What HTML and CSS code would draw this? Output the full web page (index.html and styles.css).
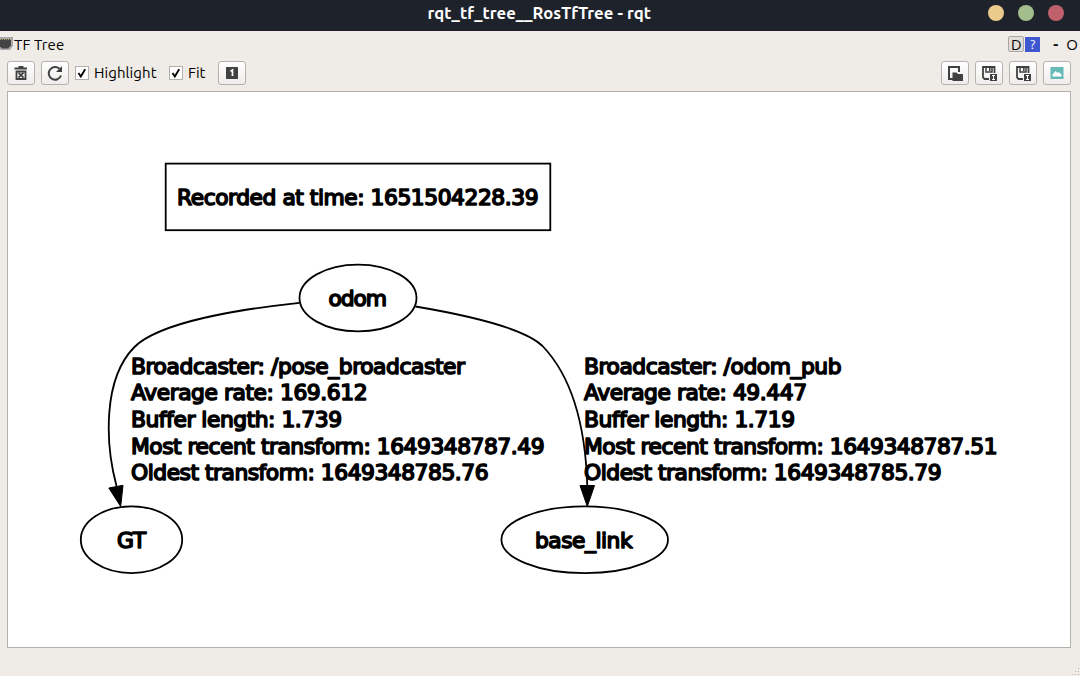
FILE: index.html
```html
<!DOCTYPE html>
<html lang="en">
<head>
<meta charset="utf-8">
<title>rqt_tf_tree__RosTfTree - rqt</title>
<link rel="stylesheet" href="styles.css">
</head>
<body>
<div class="window">
  <header class="titlebar">
    <h1 class="title">rqt_tf_tree__RosTfTree - rqt</h1>
    <div class="controls"><span class="dot yellow"></span><span class="dot green"></span><span class="dot red"></span></div>
  </header>
  <div class="dock">
    <svg class="dock-icon" width="13" height="14" viewBox="0 0 13 14"><path d="M0 0h13v9l-3 4H0z" fill="#aaa"/><path d="M0 2h11v6.500l-3 3H2L0 9.500z" fill="#444"/><path d="M0 2.500h11" stroke="#b5a66a" stroke-dasharray="1 1"/></svg>
    <span class="dock-name">TF Tree</span>
    <div class="dock-actions"><span class="key">D</span><span class="help">?</span><span class="minus">-</span><span class="float">O</span></div>
  </div>
  <div class="toolbar">
    <button class="tool"><svg width="14" height="16" viewBox="0 0 14 16"><path d="M.5 3.500h12.500M4.500 2h5" stroke="#414141" stroke-width="2"/><path d="M2.500 6.500h9V14h-9z" fill="none" stroke="#414141" stroke-width="1.800"/><path d="M4.500 7.700l5 5m0-5l-5 5" stroke="#414141" stroke-width="1.700"/></svg></button>
    <button class="tool"><svg width="16" height="16" viewBox="0 0 16 16"><path d="M14 10.500A6.300 6.300 0 1 1 12.400 3.800" fill="none" stroke="#414141" stroke-width="2"/><path d="M15 1v6H9z" fill="#414141"/></svg></button>
    <label class="check"><span class="box"><svg width="12" height="12" viewBox="0 0 12 12"><path d="M2.500 6l2.300 3.500L9.200 2.200" fill="none" stroke="#000" stroke-width="1.900"/></svg></span><span class="highlight">Highlight</span></label>
    <label class="check fit"><span class="box"><svg width="12" height="12" viewBox="0 0 12 12"><path d="M2.500 6l2.300 3.500L9.200 2.200" fill="none" stroke="#000" stroke-width="1.900"/></svg></span><span>Fit</span></label>
    <button class="tool"><svg width="12" height="12" viewBox="0 0 12 12"><rect width="12" height="12" rx=".5" fill="#414141"/><path d="M4.500 4.300L6.500 3v6" fill="none" stroke="#fff" stroke-width="1.700"/></svg></button>
    <div class="files">
      <button class="tool"><svg width="16" height="16" viewBox="0 0 16 16"><path d="M6 14H2V2h10v5" fill="none" stroke="#414141" stroke-width="2"/><path d="M5.500 7.500h4L11 9h5v7H5.500z" fill="#414141"/></svg></button>
      <button class="tool"><svg width="16" height="16" viewBox="0 0 16 16"><path d="M8 14H3.500L2 12.500V2h11.500v6" fill="none" stroke="#414141" stroke-width="1.800"/><path d="M5 2v5h6V2" fill="none" stroke="#414141" stroke-width="1.500"/><path d="M8.800 2v4" stroke="#414141" stroke-width="1.500"/><rect x="9" y="9" width="7" height="7" fill="#414141"/><path d="M11 10.500h3m-1.500 0v4m-1.500 0h3" stroke="#fff"/></svg></button>
      <button class="tool"><svg width="16" height="16" viewBox="0 0 16 16"><path d="M8 14H3.500L2 12.500V2h11.500v6" fill="none" stroke="#414141" stroke-width="1.800"/><path d="M5 2v5h6V2" fill="none" stroke="#414141" stroke-width="1.500"/><path d="M8.800 2v4" stroke="#414141" stroke-width="1.500"/><rect x="9" y="9" width="7" height="7" fill="#414141"/><path d="M11 10.500h3m-1.500 0v4m-1.500 0h3" stroke="#fff"/></svg></button>
      <button class="tool"><svg width="14" height="12" viewBox="0 0 14 12"><rect x=".5" width="13" height="12" fill="#66b9b4"/><path d="M2.500 9.500V7.500L5.500 4l2 2 1.200-1L11.500 7.500v2z" fill="#fff"/></svg></button>
    </div>
  </div>
  <main class="canvas">
    <svg class="graph" width="1062" height="555" viewBox="8 92 1062 555">
      <rect class="shape" x="165.700" y="163.600" width="384.600" height="66.600"/>
      <ellipse class="shape" cx="358" cy="298" rx="58.500" ry="33.400"/>
      <ellipse class="shape" cx="131.500" cy="539.700" rx="50.700" ry="33.400"/>
      <ellipse class="shape" cx="584.700" cy="539.700" rx="83.300" ry="33.400"/>
      <path class="shape" d="M299.500 302.800C242 309 159 322 134 347.500C103 379 105 443 116.500 486"/>
      <path class="shape" d="M415.500 306.500C460 314 523 327 542.500 346C579 384 586 443 587.300 486"/>
      <path class="arrow" d="M108.800 488L123 485.300L120.700 506.500Z"/>
      <path class="arrow" d="M580 485.500H594.500L587.300 506.500Z"/>
      <g class="label">
        <text x="177" y="205" textLength="361.500">Recorded at time: 1651504228.39</text>
        <text x="328.500" y="305.800" textLength="58.500">odom</text>
        <text x="117" y="547.500" textLength="29">GT</text>
        <text x="535" y="547.500" textLength="97.500">base_link</text>
        <text x="131" y="373.500" textLength="334">Broadcaster: /pose_broadcaster</text>
        <text x="131" y="400.200" textLength="236.500">Average rate: 169.612</text>
        <text x="131" y="426.900" textLength="211">Buffer length: 1.739</text>
        <text x="131" y="453.500" textLength="413.500">Most recent transform: 1649348787.49</text>
        <text x="131" y="480.200" textLength="357.500">Oldest transform: 1649348785.76</text>
        <text x="584" y="373.500" textLength="257.500">Broadcaster: /odom_pub</text>
        <text x="584" y="400.200" textLength="223">Average rate: 49.447</text>
        <text x="584" y="426.900" textLength="211">Buffer length: 1.719</text>
        <text x="584" y="453.500" textLength="413.500">Most recent transform: 1649348787.51</text>
        <text x="584" y="480.200" textLength="357.500">Oldest transform: 1649348785.79</text>
      </g>
    </svg>
  </main>
  <footer class="status"><svg width="9" height="9" viewBox="0 0 9 9" fill="#bbb8b4"><path d="M7 1h1v1H7zM4 4h1v1H4zM7 4h1v1H7zM1 7h1v1H1zM4 7h1v1H4zM7 7h1v1H7z"/></svg></footer>
</div>
</body>
</html>
```
FILE: styles.css
```css
* { box-sizing: border-box; }
body { margin: 0; }
.window {
  width: 1080px; height: 676px; overflow: hidden;
  display: flex; flex-direction: column;
  background: #efebe7; color: #000;
  font: 15px "Ubuntu", "Noto Sans", sans-serif;
}
.titlebar {
  height: 31px; background: #1e232b; color: #fff;
  display: grid; grid-template-columns: 1fr auto 1fr; align-items: center;
  padding: 0 16px 4px;
  border-bottom: 1px solid #201a2c;
}
.title { grid-column: 2; margin: 0; font-size: 16.6px; line-height: 26px; font-weight: 700; width: 225px; white-space: nowrap; letter-spacing: 0.1px; }
.controls { justify-self: end; display: flex; gap: 14px; }
.dot { width: 16px; height: 16px; border-radius: 50%; }
.yellow { background: #ebcb8b; }
.green { background: #a3be8c; }
.red { background: #bf616a; }
.dock { height: 28px; display: flex; align-items: center; padding: 0 2px 2px 0; }
.dock-icon { margin-right: 1px; }
.dock-name, .highlight { letter-spacing: 0.08px; }
.dock-actions { margin-left: auto; display: flex; align-items: center; line-height: 15px; }
.key { width: 16px; height: 16px; border: 1px solid #aaa7a4; border-radius: 2px; background: #e0ddda; text-align: center; line-height: 15px; }
.help { width: 15px; height: 15px; margin-left: 1px; background: #4058cf; color: #fff; text-align: center; font-size: 13px; line-height: 15px; }
.minus { margin-left: 13px; font-weight: 700; width: 7px; }
.float { margin-left: 6px; }
.toolbar { height: 28px; padding: 0 9px 0 7px; display: flex; align-items: center; }
.tool {
  width: 28px; height: 24px; padding: 0; border: 1px solid #b5b2af; border-radius: 3px;
  background: linear-gradient(#fff, #efedeb); display: flex; align-items: center; justify-content: center;
}
.tool + .tool { margin-left: 6px; }
.check { display: flex; align-items: center; margin-left: 6px; line-height: 16px; }
.check > span:last-child { padding-bottom: 1px; }
.box { width: 14px; height: 14px; margin-right: 5px; border: 1px solid #b2afac; background: #fff; display: flex; }
.highlight { width: 63px; }
.fit { margin-left: 12px; margin-right: 13px; }
.files { margin-left: auto; display: flex; }
.canvas { margin: 4px 9px 0 7px; height: 557px; border: 1px solid #b3b0ae; background: #fff; }
.graph { display: block; }
.shape { fill: none; stroke: #000; stroke-width: 1.8; }
.arrow { fill: #000; stroke: #000; stroke-width: 1; }
.label { font-family: "DejaVu Sans", sans-serif; font-size: 21.8px; fill: #000; stroke: #000; stroke-width: 1.6; stroke-linejoin: round; }
.status { flex: 1; display: flex; justify-content: flex-end; align-items: flex-end; }
```
